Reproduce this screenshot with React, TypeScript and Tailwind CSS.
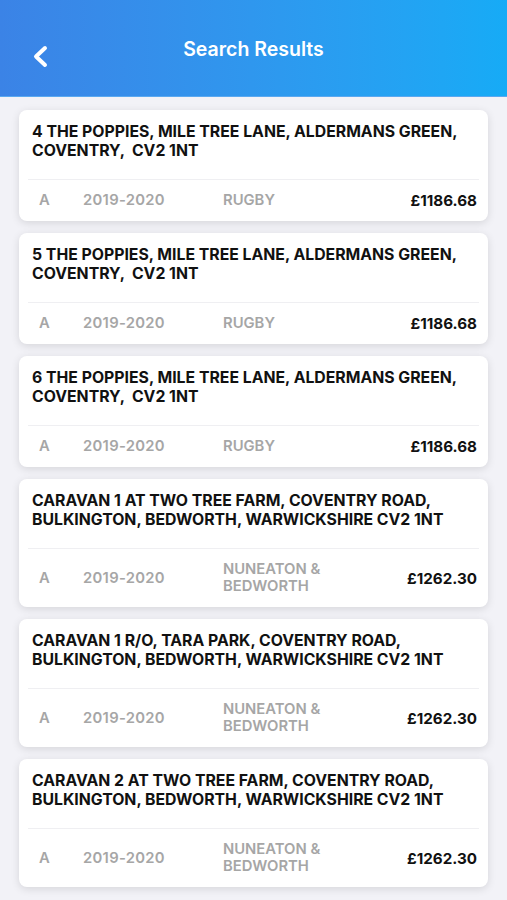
type Result = {
  address: string[];
  band: string;
  year: string;
  district: string;
  amount: string;
};

const RESULTS: Result[] = [
  {
    address: ["4 THE POPPIES, MILE TREE LANE, ALDERMANS GREEN,", "COVENTRY,  CV2 1NT"],
    band: "A",
    year: "2019-2020",
    district: "RUGBY",
    amount: "£1186.68",
  },
  {
    address: ["5 THE POPPIES, MILE TREE LANE, ALDERMANS GREEN,", "COVENTRY,  CV2 1NT"],
    band: "A",
    year: "2019-2020",
    district: "RUGBY",
    amount: "£1186.68",
  },
  {
    address: ["6 THE POPPIES, MILE TREE LANE, ALDERMANS GREEN,", "COVENTRY,  CV2 1NT"],
    band: "A",
    year: "2019-2020",
    district: "RUGBY",
    amount: "£1186.68",
  },
  {
    address: ["CARAVAN 1 AT TWO TREE FARM, COVENTRY ROAD,", "BULKINGTON, BEDWORTH, WARWICKSHIRE CV2 1NT"],
    band: "A",
    year: "2019-2020",
    district: "NUNEATON & BEDWORTH",
    amount: "£1262.30",
  },
  {
    address: ["CARAVAN 1 R/O, TARA PARK, COVENTRY ROAD,", "BULKINGTON, BEDWORTH, WARWICKSHIRE CV2 1NT"],
    band: "A",
    year: "2019-2020",
    district: "NUNEATON & BEDWORTH",
    amount: "£1262.30",
  },
  {
    address: ["CARAVAN 2 AT TWO TREE FARM, COVENTRY ROAD,", "BULKINGTON, BEDWORTH, WARWICKSHIRE CV2 1NT"],
    band: "A",
    year: "2019-2020",
    district: "NUNEATON & BEDWORTH",
    amount: "£1262.30",
  },
];

function ResultCard({ r }: { r: Result }) {
  return (
    <article className="rounded-lg bg-white shadow-[0_2px_8px_rgba(0,0,0,0.12)]">
      <div className="px-[13px] pt-[12px] pb-[19px] text-[15.8px] font-bold leading-[19px] text-[#111]">
        {r.address.map((line) => (
          <div key={line} className="whitespace-pre">
            {line}
          </div>
        ))}
      </div>
      <div className="mx-[9px] border-t border-[#efeff2]">
        <div className="flex items-center py-[12px] pl-[11px] pr-[2px] text-[14.8px] font-semibold leading-[17px] text-[#a6a6a6]">
          <span className="w-[44px]">{r.band}</span>
          <span className="w-[140px] tracking-[0.3px]">{r.year}</span>
          <span className="w-[115px]">{r.district}</span>
          <span className="ml-auto text-[15.2px] font-bold text-[#111]">{r.amount}</span>
        </div>
      </div>
    </article>
  );
}

export default function App() {
  return (
    <div className="min-h-[900px] bg-[#f2f2f7] font-['Inter',sans-serif]">
      <header className="relative flex h-[97px] items-center justify-center border-b border-[#5aa8f0] bg-gradient-to-r from-[#3b83e6] to-[#16abf6] pt-[4px]">
        <button className="absolute left-[32px] top-[45px] text-white">
          <svg width="17" height="23" viewBox="0 0 17 23" fill="none" stroke="currentColor" strokeWidth="4" strokeLinecap="round" strokeLinejoin="round">
            <path d="M13 3 4 11.5 13 20" />
          </svg>
        </button>
        <h1 className="text-[19.5px] font-semibold text-white">Search Results</h1>
      </header>

      <main className="flex flex-col gap-[12px] px-[19px] pt-[13px] pb-6">
        {RESULTS.map((r, i) => (
          <ResultCard key={i} r={r} />
        ))}
      </main>
    </div>
  );
}
